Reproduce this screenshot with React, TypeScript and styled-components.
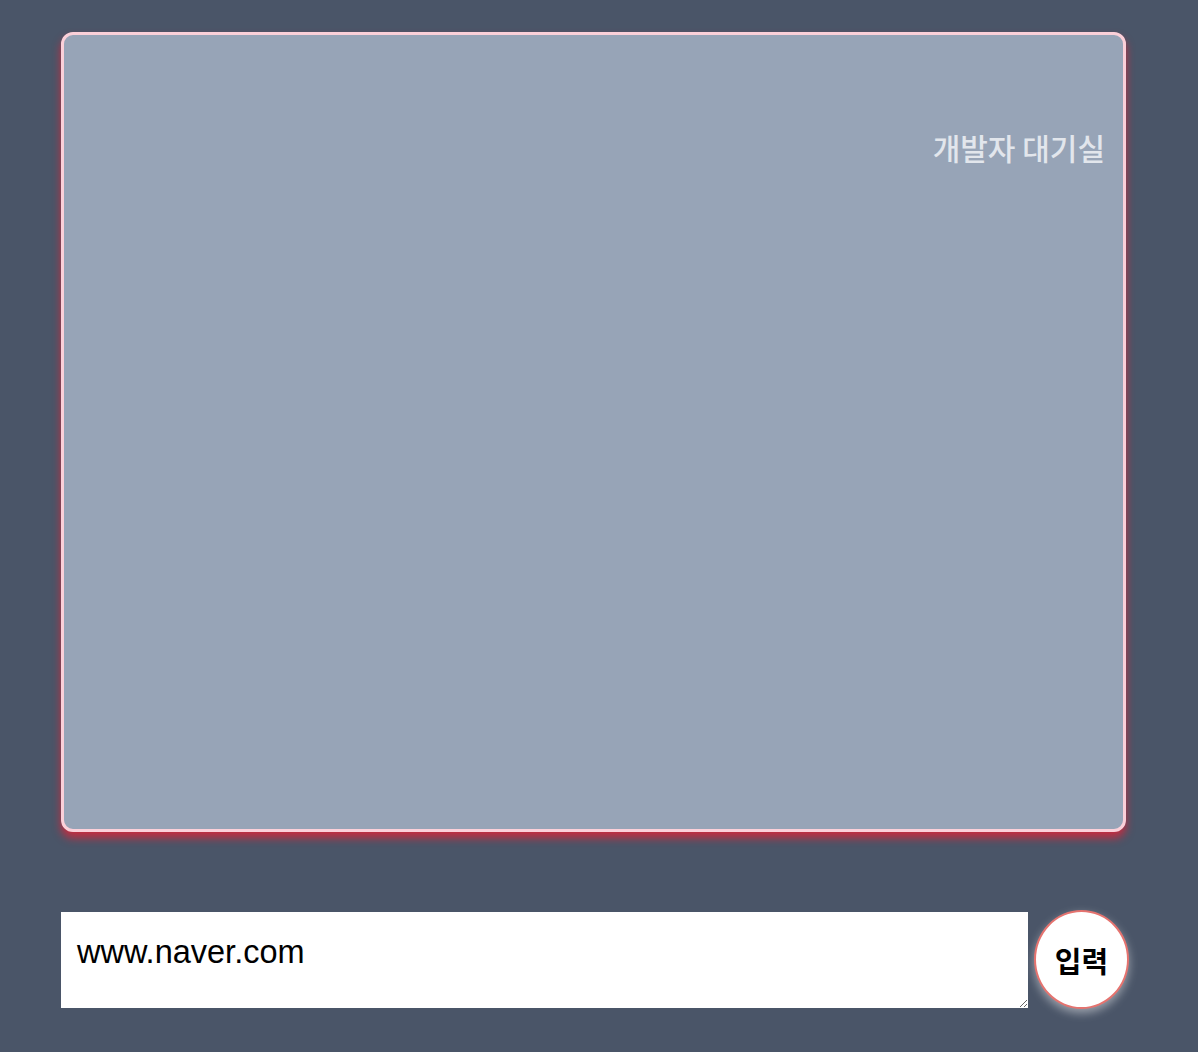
import React from 'react';
import styled, { createGlobalStyle } from 'styled-components';

const GlobalStyle = createGlobalStyle`
  html, body {
    margin: 0;
    padding: 0;
    background-color: #4a5568;
  }
  body {
    font-family: "Noto Sans CJK KR", "Liberation Sans", sans-serif;
  }
`;

const Page = styled.div`
  width: 1198px;
  min-height: 1052px;
  box-sizing: border-box;
  padding: 32px 72px 0 61px;
  display: flex;
  flex-direction: column;
  gap: 78px;
`;

const Room = styled.div`
  box-sizing: border-box;
  height: 800px;
  background-color: #97a4b7;
  border: 3px solid #fbd0d9;
  border-radius: 12px;
  box-shadow: 0 6px 8px rgba(210, 40, 60, 0.9);
  padding: 90px 18px 0 18px;
  display: flex;
  flex-direction: column;
  align-items: flex-end;
`;

const RoomTitle = styled.h2`
  margin: 0;
  font-family: "Noto Sans CJK KR", sans-serif;
  font-size: 30px;
  font-weight: 500;
  color: #e2e6ec;
`;

const InputRow = styled.div`
  display: flex;
  align-items: center;
  gap: 6px;
  margin-right: -3px;
`;

const UrlInput = styled.textarea`
  box-sizing: border-box;
  width: 967px;
  height: 96px;
  border: none;
  outline: none;
  padding: 22px 16px;
  font-family: "Liberation Sans", Arial, sans-serif;
  font-size: 32.5px;
  color: #000;
  background: #fff;
`;

const SubmitButton = styled.button`
  box-sizing: border-box;
  width: 95px;
  height: 99px;
  border-radius: 50%;
  border: 2px solid #e5736f;
  background: #fff;
  box-shadow: 0 4px 10px rgba(255, 255, 255, 0.45);
  font-family: "Noto Sans CJK KR", sans-serif;
  font-size: 29px;
  font-weight: 700;
  color: #000;
  padding: 0;
  cursor: pointer;
`;

const App = () => {
  return (
    <>
      <GlobalStyle />
      <Page>
        <Room>
          <RoomTitle>개발자 대기실</RoomTitle>
        </Room>
        <InputRow>
          <UrlInput defaultValue="www.naver.com" />
          <SubmitButton>입력</SubmitButton>
        </InputRow>
      </Page>
    </>
  );
};

export default App;
